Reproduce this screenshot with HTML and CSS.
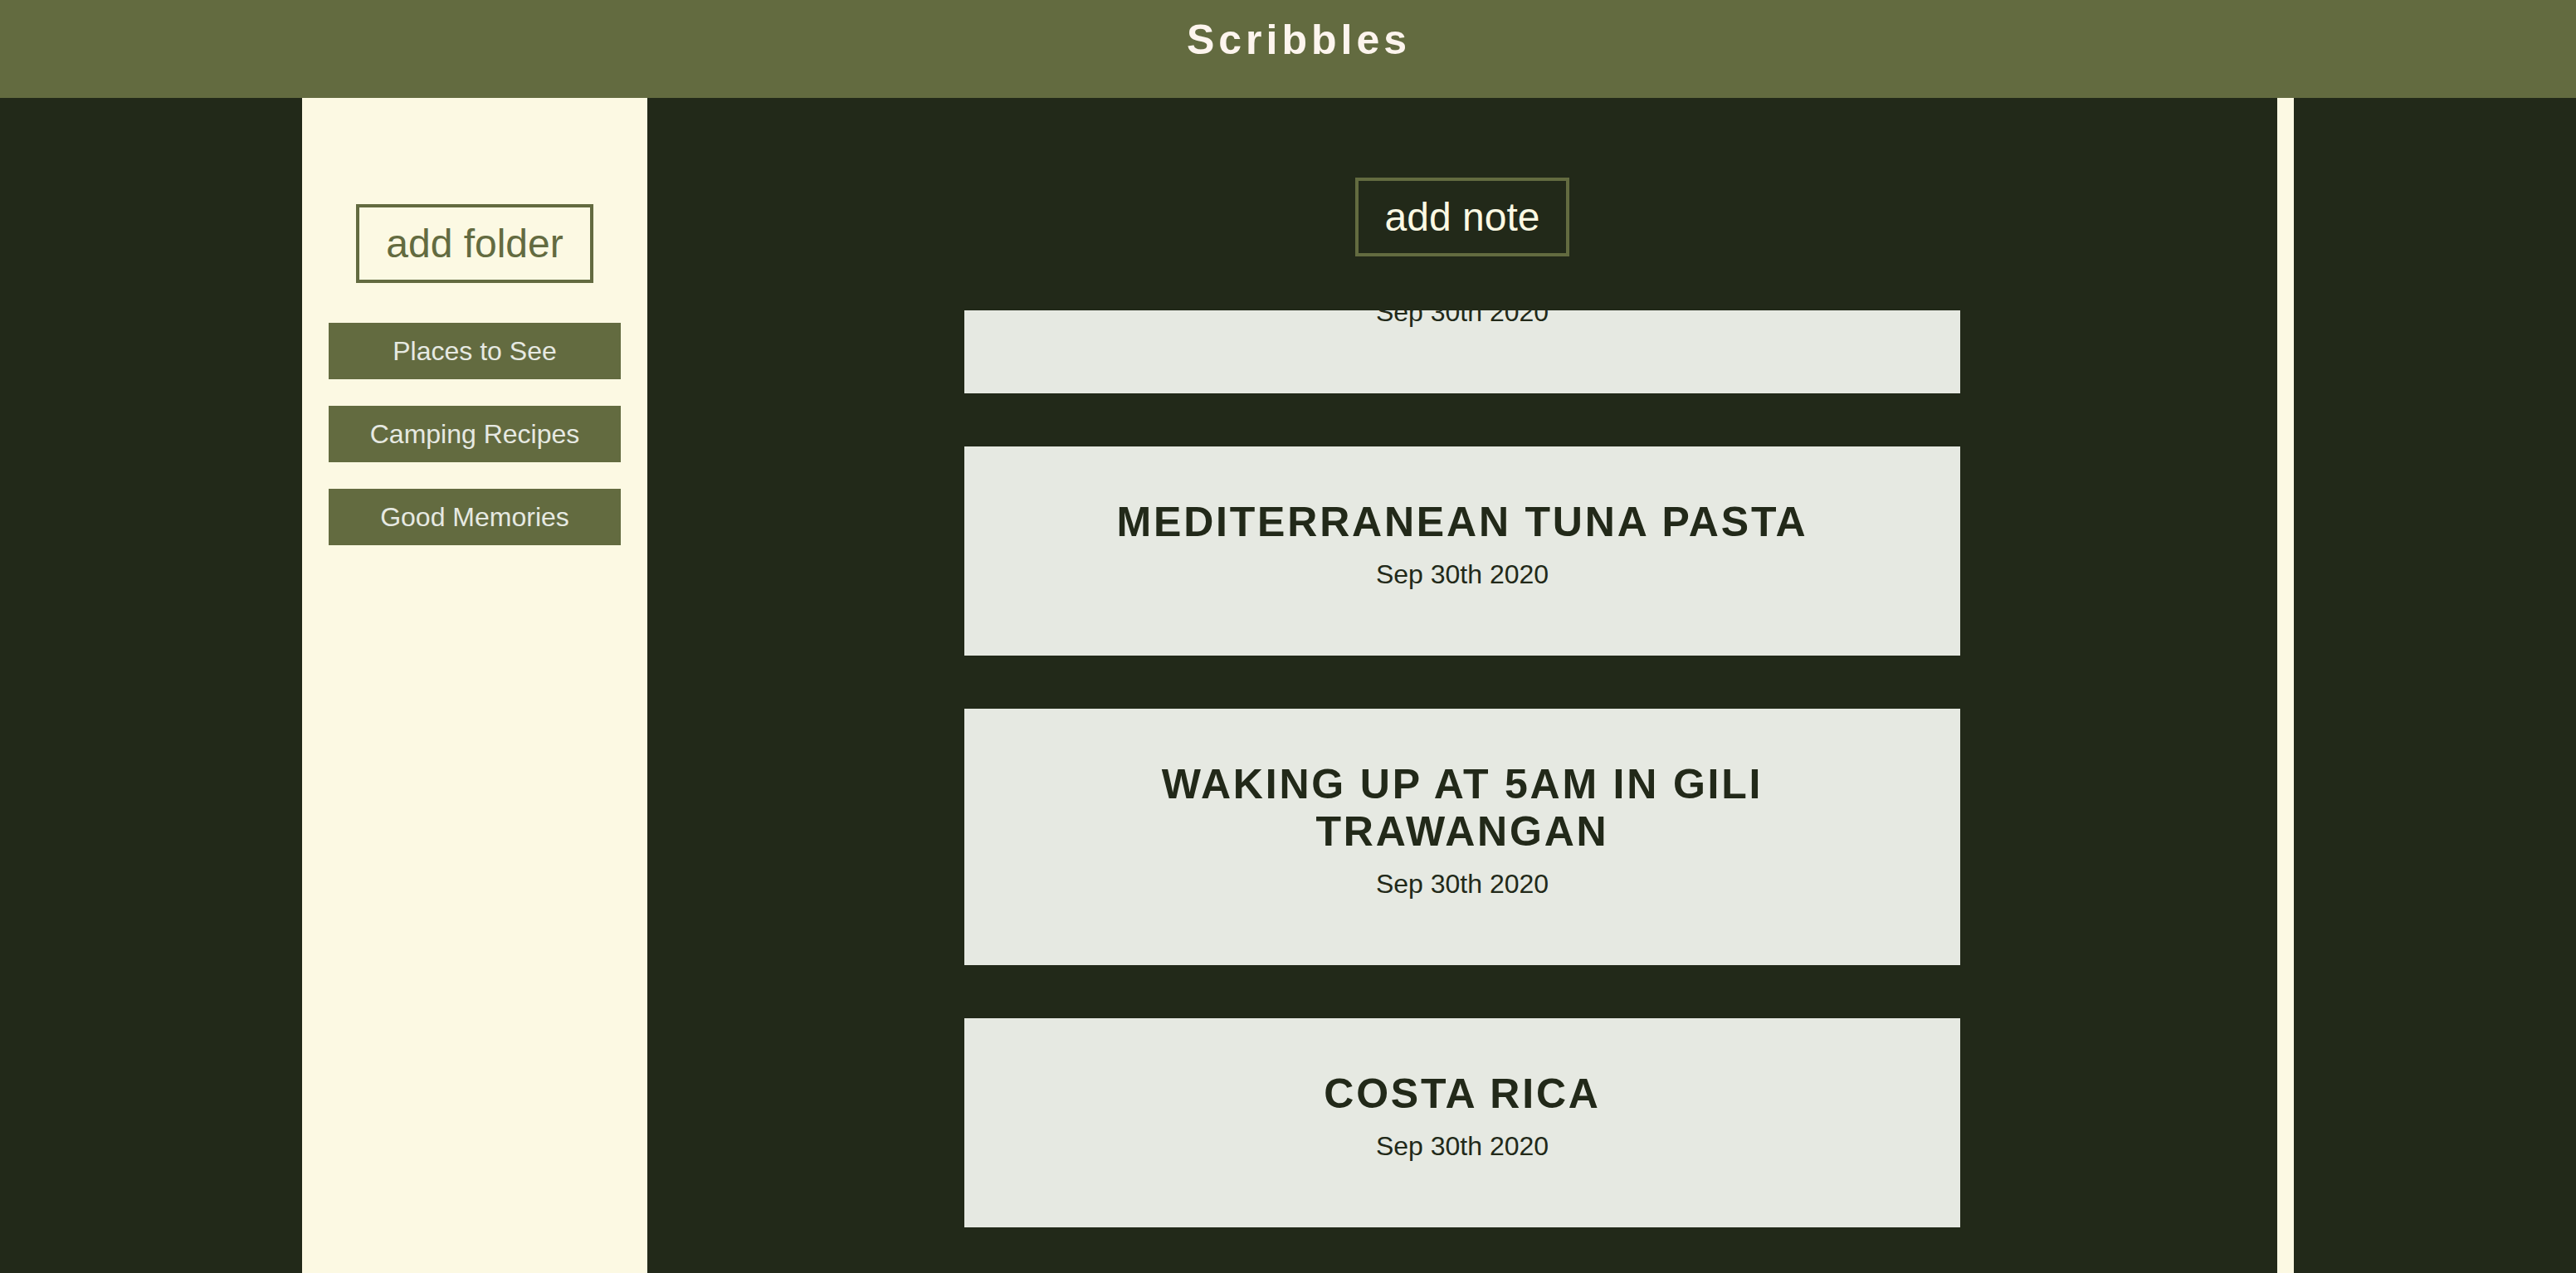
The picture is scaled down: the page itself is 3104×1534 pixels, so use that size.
FILE: index.html
```html
<!DOCTYPE html>
<html lang="en">
<head>
<meta charset="utf-8">
<title>Scribbles</title>
<link rel="stylesheet" href="styles.css">
</head>
<body>
<header class="topbar">
  <h1 class="brand">Scribbles</h1>
</header>
<div class="layout">
  <aside class="sidebar">
    <button class="outline-btn add-folder" type="button">add folder</button>
    <ul class="folders">
      <li><button class="folder" type="button">Places to See</button></li>
      <li><button class="folder" type="button">Camping Recipes</button></li>
      <li><button class="folder" type="button">Good Memories</button></li>
    </ul>
  </aside>
  <main class="main">
    <div class="main-top">
      <button class="outline-btn add-note" type="button">add note</button>
    </div>
    <div class="notes">
      <ul class="note-list">
        <li class="note">
          <h2 class="note-title">BALI SUNSETS</h2>
          <p class="note-date">Sep 30th 2020</p>
        </li>
        <li class="note">
          <h2 class="note-title">MEDITERRANEAN TUNA PASTA</h2>
          <p class="note-date">Sep 30th 2020</p>
        </li>
        <li class="note">
          <h2 class="note-title">WAKING UP AT 5AM IN GILI TRAWANGAN</h2>
          <p class="note-date">Sep 30th 2020</p>
        </li>
        <li class="note">
          <h2 class="note-title">COSTA RICA</h2>
          <p class="note-date">Sep 30th 2020</p>
        </li>
      </ul>
    </div>
  </main>
  <div class="rail"></div>
</div>
<script src="script.js"></script>
</body>
</html>
```
FILE: styles.css
```css
html, body {
  margin: 0;
  height: 100%;
}

body {
  background: #222919;
  font-family: "Liberation Sans", Arial, Helvetica, sans-serif;
  display: flex;
  flex-direction: column;
  overflow: hidden;
}

.topbar {
  flex: none;
  height: 118px;
  box-sizing: border-box;
  padding-top: 20px;
  background: #636b40;
  text-align: center;
}

.brand {
  margin: 0;
  padding-left: 26px;
  font-size: 50px;
  line-height: 57px;
  font-weight: 700;
  letter-spacing: 5px;
  color: #fdf5ee;
}

.layout {
  flex: 1;
  min-height: 0;
  display: grid;
  grid-template-columns: 416px 1fr 20px;
  margin: 0 340px 0 364px;
}

.sidebar {
  background: #fcf9e3;
  display: flex;
  flex-direction: column;
  align-items: center;
  padding: 128px 32px 0;
}

.outline-btn {
  font-family: inherit;
  font-size: 48px;
  line-height: 55px;
  padding: 16px 32px;
  border: 4px solid #636b40;
  background: transparent;
  margin: 0;
}

.add-folder {
  color: #636b40;
}

.add-note {
  color: #fcf9e3;
}

.folders {
  list-style: none;
  margin: 48px 0 0;
  padding: 0;
  width: 100%;
  display: flex;
  flex-direction: column;
  gap: 32px;
}

.folder {
  display: block;
  width: 100%;
  height: 68px;
  margin: 0;
  padding: 0;
  border: 0;
  background: #636b40;
  color: #e6e9e2;
  font-family: inherit;
  font-size: 32px;
}

.main {
  display: flex;
  flex-direction: column;
  min-height: 0;
  overflow: hidden;
}

.main-top {
  flex: none;
  height: 256px;
  box-sizing: border-box;
  padding-top: 96px;
  display: flex;
  justify-content: center;
  align-items: flex-start;
}

.notes {
  flex: 1;
  min-height: 0;
  overflow: hidden;
}

.note-list {
  list-style: none;
  margin: 0;
  padding: 0 0 64px;
  display: flex;
  flex-direction: column;
  align-items: center;
  gap: 64px;
}

.note {
  width: 1200px;
  box-sizing: border-box;
  padding: 63px 100px 79px;
  background: #e6e9e2;
  color: #222919;
  text-align: center;
}

.note-title {
  margin: 0 0 16px;
  font-size: 50px;
  line-height: 57px;
  font-weight: 700;
  letter-spacing: 2.8px;
}

.note-date {
  margin: 0;
  font-size: 32px;
  line-height: 37px;
}

.rail {
  background: #fcf9e3;
}
```
FILE: script.js
```js
document.querySelector('.notes').scrollTop = 152;
```
